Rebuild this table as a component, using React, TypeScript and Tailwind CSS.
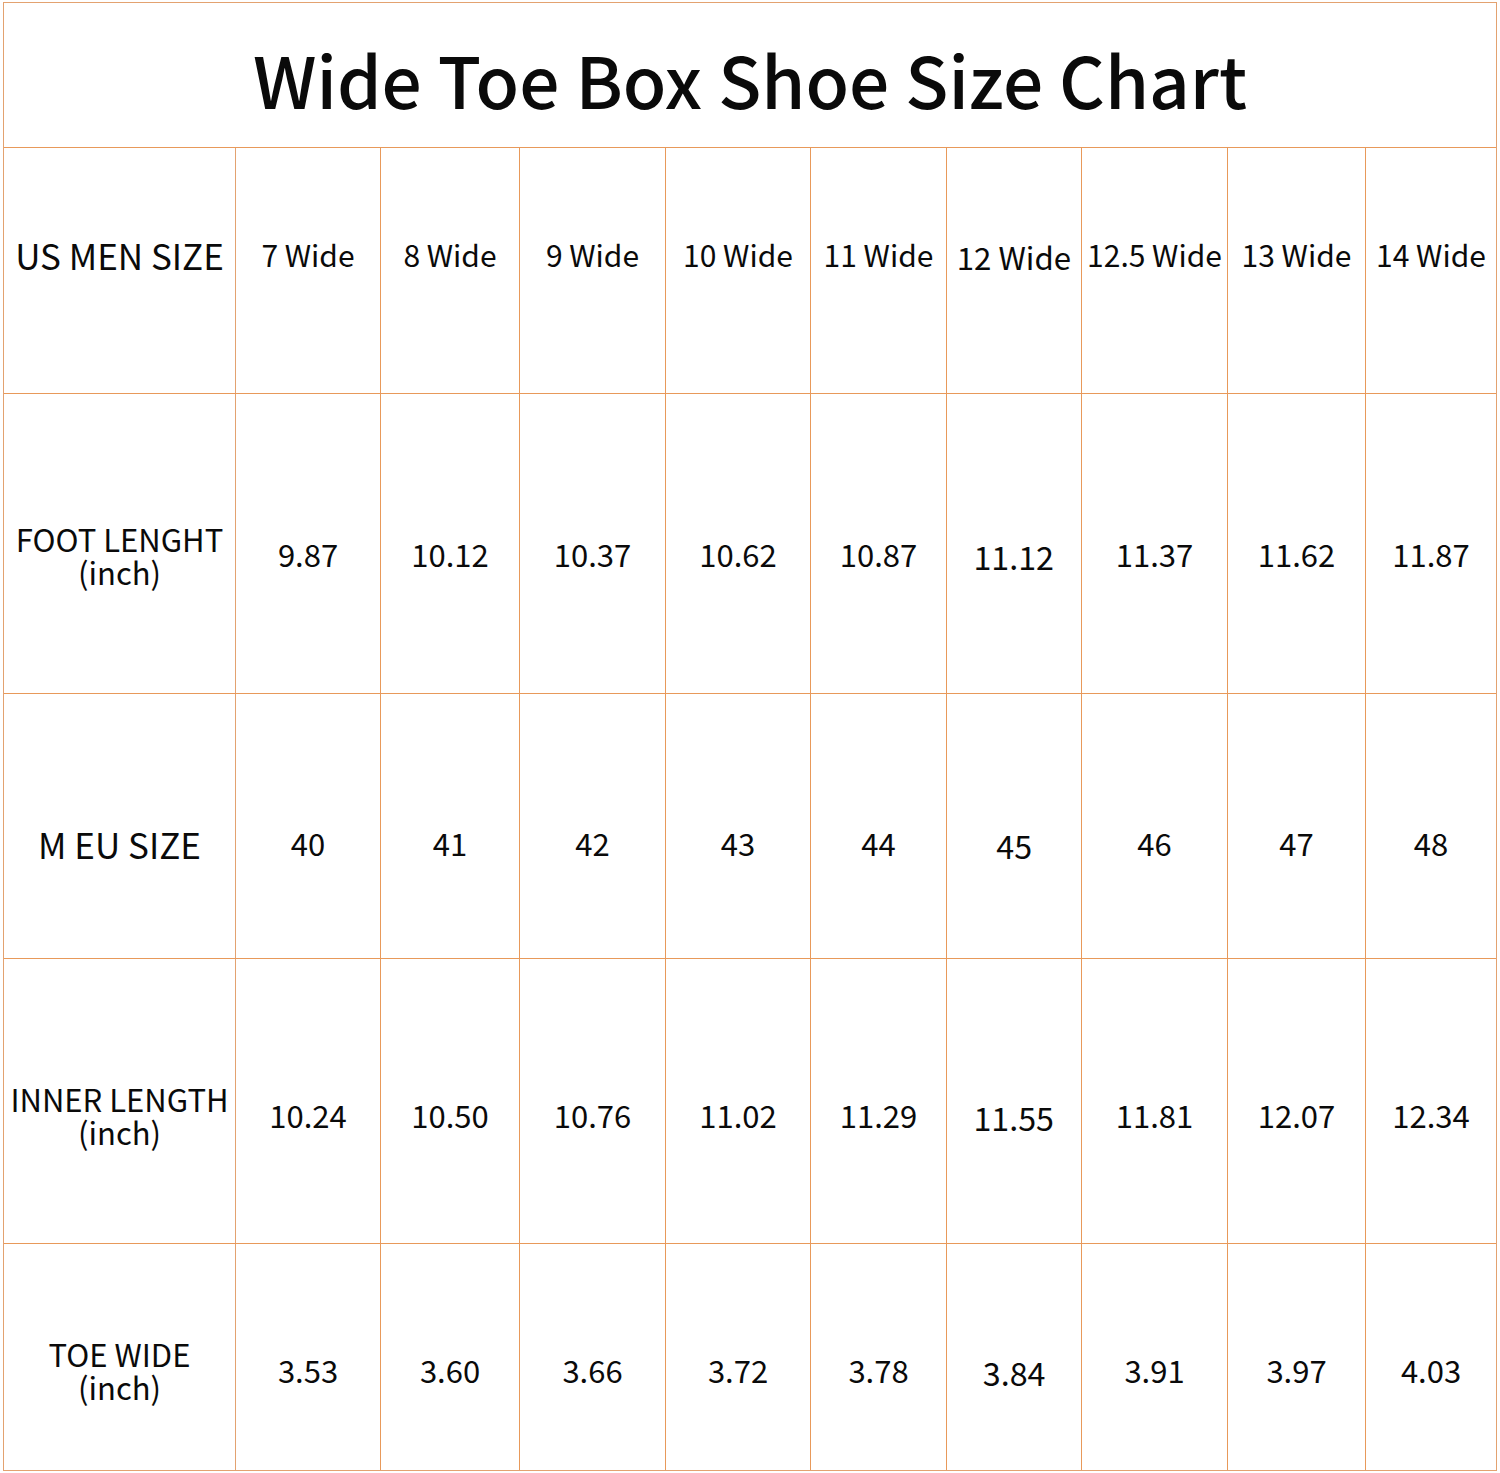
const cols = ["232px", "145px", "139px", "146px", "145px", "136px", "135px", "146px", "138px", "130px"];

type Row = {
  label: string[];
  values: string[];
  height: string;
  shift: string;
};

const rows: Row[] = [
  {
    label: ["US MEN SIZE"],
    values: ["7 Wide", "8 Wide", "9 Wide", "10 Wide", "11 Wide", "12 Wide", "12.5 Wide", "13 Wide", "14 Wide"],
    height: "h-[246px]",
    shift: "pb-[32px]",
  },
  {
    label: ["FOOT LENGHT", "(inch)"],
    values: ["9.87", "10.12", "10.37", "10.62", "10.87", "11.12", "11.37", "11.62", "11.87"],
    height: "h-[300px]",
    shift: "pt-[22px]",
  },
  {
    label: ["M EU SIZE"],
    values: ["40", "41", "42", "43", "44", "45", "46", "47", "48"],
    height: "h-[265px]",
    shift: "pt-[34px]",
  },
  {
    label: ["INNER LENGTH", "(inch)"],
    values: ["10.24", "10.50", "10.76", "11.02", "11.29", "11.55", "11.81", "12.07", "12.34"],
    height: "h-[285px]",
    shift: "pt-[28px]",
  },
  {
    label: ["TOE WIDE", "(inch)"],
    values: ["3.53", "3.60", "3.66", "3.72", "3.78", "3.84", "3.91", "3.97", "4.03"],
    height: "h-[226px]",
    shift: "pt-[26px]",
  },
];

export default function App() {
  return (
    <div className="bg-white min-h-screen pt-[2px] pl-[3px] text-[#0a0a0a] font-['Noto_Sans_CJK_SC','Noto_Sans',sans-serif]">
      <div className="w-[1494px] border border-[#e3a270]">
        <div className="h-[145px] border-b border-[#e8995a] flex items-center justify-center">
          <h1 className="text-[71px] font-medium pt-[6px]">Wide Toe Box Shoe Size Chart</h1>
        </div>

        {rows.map((row, r) => (
          <div
            key={r}
            className={`flex ${row.height} ${r < rows.length - 1 ? "border-b border-[#e8995a]" : ""}`}
          >
            <div
              style={{ width: cols[0] }}
              className={`shrink-0 border-r border-[#e3a270] flex items-center justify-center text-center leading-[33px] ${row.shift} ${row.label.length === 1 ? "text-[35px]" : "text-[31px]"}`}
            >
              <span>
                {row.label[0]}
                {row.label[1] && (
                  <>
                    <br />
                    {row.label[1]}
                  </>
                )}
              </span>
            </div>
            {row.values.map((v, i) => (
              <div
                key={v}
                style={{ width: cols[i + 1] }}
                className={`shrink-0 flex items-center justify-center ${row.shift} ${i < row.values.length - 1 ? "border-r border-[#e8995a]" : ""}`}
              >
                <span
                  className={`${r === 0 ? "text-[30px]" : "text-[31px]"} ${i === 5 ? "translate-y-[2px] scale-[1.04]" : ""}`}
                >
                  {v}
                </span>
              </div>
            ))}
          </div>
        ))}
      </div>
    </div>
  );
}
